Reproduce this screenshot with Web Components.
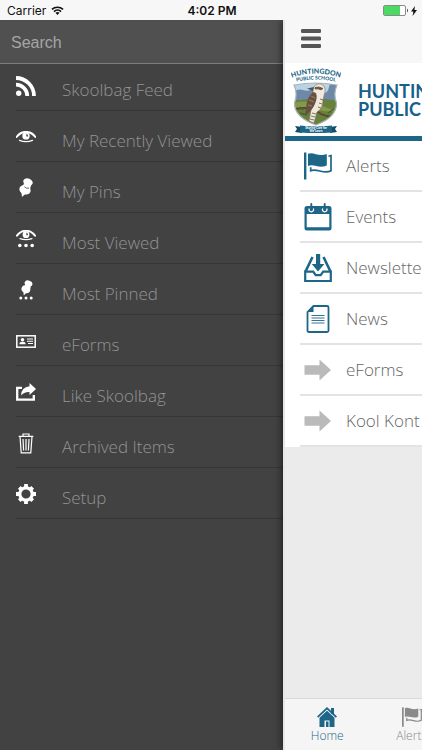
<!DOCTYPE html>
<html lang="en">
<head>
<meta charset="utf-8">
<meta name="viewport" content="width=device-width, initial-scale=1">
<title>Skoolbag</title>
<style>
	html, body {
		margin: 0;
		height: 100%;
		overflow: hidden;
	}

	body {
		font-family: "Open Sans", "Noto Sans", sans-serif;
		background: #f7f7f7;
	}
</style>
</head>
<body>
<skool-app></skool-app>

<script>
// name: [viewBox, shapes]
const ICONS = {
	wifi: ['0 0 14 10', `<g fill="none" stroke="currentColor" stroke-width="1.7"><path d="M1 3.7a8.6 8.6 0 0 1 12 0"/><path d="M3.2 6a5.4 5.4 0 0 1 7.6 0"/></g><path d="M4.8 7.4a3.2 3.2 0 0 1 4.4 0L7 9.8z" fill="currentColor"/>`],
	battery: ['0 0 26 12', `<rect x=".5" y=".5" width="22" height="10" rx="1.5" fill="#fff" stroke="#8a8a8a"/><rect x="1" y="1" width="16" height="9" fill="#4cd964"/><path d="M24 3.5q2 2 0 4z" fill="#444"/>`],
	bolt: ['0 0 6 10', `<path d="M4 0 0 5.6h2.4L1.6 10 6 4H3.4z" fill="currentColor"/>`],
	menu: ['0 0 20 20', `<g fill="currentColor"><rect width="20" height="4" rx="1.3"/><rect y="7.5" width="20" height="4" rx="1.3"/><rect y="15" width="20" height="4" rx="1.3"/></g>`],
	feed: ['0 0 20 20', `<circle cx="2.7" cy="17.3" r="2.7" fill="currentColor"/><path d="M0 8.7A11.3 11.3 0 0 1 11.3 20M0 2A18 18 0 0 1 18 20" fill="none" stroke="currentColor" stroke-width="3.8"/>`],
	eye: ['0 0 20 12', `<path d="M.6 6C5.500-.8 14.500-.8 19.400 6" fill="none" stroke="currentColor" stroke-width="2" stroke-linecap="round"/><path d="M3.500 9.300q6.500 2.600 13 0" fill="none" stroke="currentColor" stroke-width="1.300" stroke-linecap="round"/><circle cx="10" cy="4.900" r="3.700" fill="currentColor"/><path d="M10.400 2.800v2.600h1.800q0-2-1.800-2.600z" fill="#424242"/>`],
	eyeDots: ['0 0 20 18', `<path d="M1 5.600C6-.8 14-.8 19 5.600" fill="none" stroke="currentColor" stroke-width="2" stroke-linecap="round"/><path d="M4 8.600q6 2.200 12 0" fill="none" stroke="currentColor" stroke-width="1.200" stroke-linecap="round"/><circle cx="10" cy="4.700" r="3.400" fill="currentColor"/><path d="M10.400 2.600v2.600h1.600q0-2-1.600-2.600z" fill="#424242"/><g fill="currentColor"><circle cx="3.800" cy="15.500" r="1.800"/><circle cx="10" cy="15.500" r="1.800"/><circle cx="16.200" cy="15.500" r="1.800"/></g>`],
	pin: ['0 0 20 20', `<g fill="currentColor"><ellipse cx="12" cy="4" rx="4.900" ry="3.500" transform="rotate(22 12 4)"/><path d="M8 5 6.500 10l6.500 3 2.300-6z"/><ellipse cx="9" cy="11.800" rx="5.800" ry="4.600" transform="rotate(22 9 11.800)"/><path d="M5.400 14 6 19l3.700-3.600z"/></g><path d="M8.400 8.800q1.900 2 4.600 1.300" fill="none" stroke="#424242" stroke-width=".8"/>`],
	pinDots: ['0 0 20 20', `<g fill="currentColor"><ellipse cx="12.500" cy="3.500" rx="4" ry="3" transform="rotate(20 12.500 3.500)"/><path d="M9.200 4.500 8 8.500l5 2.200 2-4.200z"/><ellipse cx="9.900" cy="9.300" rx="4.500" ry="3.700" transform="rotate(22 9.900 9.300)"/><path d="M7.300 11 7.800 15.500l2.800-3z"/><circle cx="4.800" cy="18" r="1.500"/><circle cx="10" cy="18" r="1.500"/><circle cx="15.200" cy="18" r="1.500"/></g>`],
	card: ['0 0 20 13', `<rect x=".8" y=".8" width="18.400" height="11.400" fill="none" stroke="currentColor" stroke-width="1.500"/><g fill="currentColor"><circle cx="6.500" cy="4.800" r="1.800"/><path d="M3.400 9.200q0-2.400 3.100-2.400t3.100 2.400z"/><path d="M11 3.500h6v1h-6zM11 5.800h6v1h-6zM12 8h5v1h-5z"/></g>`],
	share: ['0 0 20 18', `<path d="M6 4.800H1.200v11.800h16.600V12" fill="none" stroke="currentColor" stroke-width="2.300"/><path d="M13.500 0 20 6l-6.500 6V9Q8 8.700 5 12.500 5.300 4 13.500 3.200z" fill="currentColor"/>`],
	trash: ['0 0 20 21', `<path d="M2.700 3.300h14.600M7 3V1h6v2M4 3.500l1.200 16.300h9.600L16 3.500M7 6l.6 11.500M10 6v11.500M13 6l-.6 11.500" fill="none" stroke="currentColor" stroke-width="1.200"/>`],
	gear: ['0 0 20 20', `<circle cx="10" cy="10" r="6.200" fill="none" stroke="currentColor" stroke-width="3.200"/><g stroke="currentColor" stroke-width="3.800"><path d="M10 0v4M10 16v4"/><path d="M10 .5v4M10 15.500v4" transform="rotate(45 10 10)"/><path d="M10 0v4M10 16v4" transform="rotate(90 10 10)"/><path d="M10 .5v4M10 15.500v4" transform="rotate(135 10 10)"/></g>`],
	flag: ['0 0 28 28', `<g fill="currentColor"><path d="M0 .5h2.400V27.500H0z"/><path d="M4 1.800C10-.6 14 5.500 22.800 2v11.600C15 17 10 11.500 4 14z"/></g><path d="M24.500 4.200 27 3.500v15.200c-7 4.300-14-3-20.300 0v-3.500" fill="none" stroke="currentColor" stroke-width="1.700"/>`],
	calendar: ['0 0 28 28', `<path fill-rule="evenodd" d="M3 3h22q2.500 0 2.500 2.500V25q0 2.500-2.500 2.500H3Q.5 27.500.5 25V5.500Q.5 3 3 3zm-.3 8v13.200h22.600V11z" fill="currentColor"/><path d="M5.300 5.500a2.300 2.300 0 1 0 4 0M18.700 5.500a2.300 2.300 0 1 0 4 0" fill="none" stroke="#fff" stroke-width="1.300"/><path d="M7.300 1v5.500M20.700 1v5.500" stroke="currentColor" stroke-width="1.900" stroke-linecap="round"/>`],
	inbox: ['0 0 28 28', `<g fill="none" stroke="currentColor"><path d="M8.500 3 1.500 17.500M19.500 3l7 14.500" stroke-width="2.600"/><path d="M1.200 17.600h8l2.500 3.600h5l2.500-3.600h7.600V27H1.200z" stroke-width="2.200"/></g><path d="M12 0h4.200v10h4.200L14 17.500 7.800 10H12z" fill="currentColor"/>`],
	news: ['0 0 28 28', `<path d="M9.500 1H23q1.500 0 1.500 1.500v23Q24.500 27 23 27H5q-1.500 0-1.500-1.500V7z" fill="#fff" stroke="currentColor" stroke-width="1.800"/><path d="M9.500 1v6h-6z" fill="currentColor"/><path d="M7.500 10.500h13M7.500 13h13M7.500 15.500h13M7.500 18h13" stroke="currentColor" stroke-width=".9"/>`],
	arrow: ['0 0 28 28', `<path d="M.5 9.200h15V3.500L27 14 15.500 24.500v-5.700H.5z" fill="#bababa"/>`],
	home: ['0 0 20 20', `<g fill="currentColor"><path d="M14 1h3v6h-3z"/><path d="M10 0 0 9.600l1.200 1.200L10 2.600l8.800 8.200L20 9.600z"/><path d="M10 3.800 2.500 10.800V20h5v-6.500h5V20h5v-9.200z"/><path d="M9 14.500h2.500V20H9z"/></g>`]
};

class SkoolIcon extends HTMLElement {

	constructor() {
		super();
		this.attachShadow({ mode: 'open' });
	}

	connectedCallback() {
		const [box, shapes] = ICONS[this.getAttribute('name')];
		this.shadowRoot.innerHTML = `
			<style>
				:host {
					display: inline-flex;
					width: 20px;
					flex: none;
				}

				svg {
					display: block;
					width: 100%;
				}
			</style>
			<svg viewBox="${box}" aria-hidden="true">${shapes}</svg>
		`;
	}
}
customElements.define('skool-icon', SkoolIcon);


class StatusBar extends HTMLElement {

	constructor() {
		super();
		this.attachShadow({ mode: 'open' }).innerHTML = `
			<style>
				:host {
					display: grid;
					grid-template-columns: 1fr auto 1fr;
					align-items: center;
					box-sizing: border-box;
					height: 20px;
					padding: 2px 5px 0 7px;
					background: #f7f7f7;
					color: #111;
					font: 12px/16px Inter, Roboto, sans-serif;
				}

				div {
					display: flex;
					align-items: center;
					gap: 5px;
				}

				div:last-child {
					justify-content: flex-end;
					gap: 2px;
				}

				time {
					font-weight: 600;
				}

				.wifi {
					width: 13px;
				}

				.battery {
					width: 26px;
				}

				.bolt {
					width: 6px;
				}
			</style>
			<div><span>Carrier</span><skool-icon class="wifi" name="wifi"></skool-icon></div>
			<time>4:02 PM</time>
			<div><skool-icon class="battery" name="battery"></skool-icon><skool-icon class="bolt" name="bolt"></skool-icon></div>
		`;
	}
}
customElements.define('status-bar', StatusBar);


class DrawerItem extends HTMLElement {

	constructor() {
		super();
		this.attachShadow({ mode: 'open' });
	}

	connectedCallback() {
		this.shadowRoot.innerHTML = `
			<style>
				:host {
					display: block;
					margin-left: 16px;
					border-bottom: 1px solid #373737;
				}

				a {
					display: flex;
					align-items: center;
					gap: 26px;
					height: 46px;
					padding-bottom: 2px;
					box-sizing: border-box;
					color: #939393;
					font-size: 17px;
					font-weight: 300;
					line-height: 24px;
					text-decoration: none;
					white-space: nowrap;
				}

				span {
					padding-top: 8px;
				}

				skool-icon {
					color: #fff;
				}
			</style>
			<a href="#"><skool-icon name="${this.getAttribute('icon')}"></skool-icon><span><slot></slot></span></a>
		`;
	}
}
customElements.define('drawer-item', DrawerItem);


class SideDrawer extends HTMLElement {

	constructor() {
		super();
		this.attachShadow({ mode: 'open' }).innerHTML = `
			<style>
				:host {
					display: block;
					background: #424242;
				}

				input {
					display: block;
					box-sizing: border-box;
					width: 100%;
					height: 44px;
					margin: 0;
					padding: 2px 11px 0;
					border: 0;
					border-bottom: 1px solid #7d7d7d;
					border-radius: 0;
					outline: 0;
					background: #505050;
					color: #fff;
					font: 16px "Liberation Sans", Arial, sans-serif;
				}

				input::placeholder {
					color: #a5a5a5;
					opacity: 1;
				}

				nav {
					display: flex;
					flex-direction: column;
					gap: 4px;
				}
			</style>
			<input type="text" placeholder="Search" aria-label="Search">
			<nav><slot></slot></nav>
		`;
	}
}
customElements.define('side-drawer', SideDrawer);


class SchoolBanner extends HTMLElement {

	constructor() {
		super();
		this.attachShadow({ mode: 'open' }).innerHTML = `
			<style>
				:host {
					display: flex;
					align-items: center;
					gap: 17px;
					height: 73px;
					padding-left: 6px;
					border-bottom: 5px solid #1d6688;
					background: #fff;
				}

				svg {
					flex: none;
					width: 50px;
					height: 66px;
				}

				h1 {
					margin: 0;
					color: #17608a;
					font: 700 18px/18px Lato, sans-serif;
					white-space: nowrap;
				}
			</style>
			<svg viewBox="0 0 50 66" font-family="Lato, sans-serif" font-weight="900" text-anchor="middle">
				<defs>
					<path id="top" d="M0 11Q25 2 50 11"/>
					<path id="low" d="M0 16Q25 9 50 16"/>
					<clipPath id="shield"><path d="M3 18Q25 14 46 18Q42 27 45.500 36Q46 50 25 58Q3 50 3.500 36Q7 27 3 18z"/></clipPath>
				</defs>
				<text font-size="7" fill="#1d6688"><textPath href="#top" startOffset="50%">HUNTINGDON</textPath></text>
				<text font-size="5" fill="#1d6688"><textPath href="#low" startOffset="50%">PUBLIC SCHOOL</textPath></text>
				<g clip-path="url(#shield)">
					<path d="M0 12h50v50H0z" fill="#b9d3e6"/>
					<path d="M0 27q6-6 12-4t9-1 9 2 8-4 12 4v12H0z" fill="#6e89a8"/>
					<path d="M0 34q25-4 50 0v26H0z" fill="#65813b"/>
					<path d="M0 36q18-4 32 3T50 40v4q-15 2-26-2T0 42z" fill="#86984a"/>
					<path d="M5 42q14-3 22 3t20 4" fill="none" stroke="#5b4930" stroke-width="2"/>
					<path d="M9 46l7 2M37 46l6-4M12 43l-3-3" stroke="#4c6030" stroke-width="1.500"/>
				</g>
				<path d="M3 18Q25 14 46 18Q42 27 45.500 36Q46 50 25 58Q3 50 3.500 36Q7 27 3 18z" fill="none" stroke="#a8b4b8" stroke-width="1.200"/>
				<path d="M22 22q2-6 8-5 5 2 4 8l-2 8q0 9-6 12l-3 11-5-2 2-11q-3-8 2-15z" fill="#eee9dc" stroke="#7b6b5c" stroke-width=".6"/>
				<path d="M22 25q-6 5-7 16l-1 7q5-2 9-9 4-8 2-13z" fill="#66503f"/>
				<path d="M20 29l4 2M18 33l5 2M17 38l4 1" stroke="#a98e70" stroke-width=".8"/>
				<path d="M24 20.500q4-1.500 8 1l-2 1.300q-3-1.400-6-.8zM29 32l3 1M28 36l3 1M27 40l3 1M21 46l4 1M20 49l4 1M19 52l4 1" fill="#6b5240" stroke="#6b5240" stroke-width=".8"/>
				<path d="M23 20l-7 1.500 6 2.500z" fill="#59534e"/>
				<path d="M4 59l7 1v6l-7-1 2-3zM46 59l-7 1v6l7-1-2-3z" fill="#124b69"/>
				<path d="M9 58.500q16 2 32 0v7q-16 1-32 0z" fill="#1d6688"/>
				<g font-size="3" fill="#fff"><text x="25" y="62">Sharing Care for</text><text x="25" y="65">We Learn</text></g>
			</svg>
			<h1><slot></slot></h1>
		`;
	}
}
customElements.define('school-banner', SchoolBanner);


class ListItem extends HTMLElement {

	constructor() {
		super();
		this.attachShadow({ mode: 'open' });
	}

	connectedCallback() {
		this.shadowRoot.innerHTML = `
			<style>
				:host {
					display: block;
					padding-left: 15px;
					background: #fff;
				}

				a {
					display: flex;
					align-items: center;
					gap: 14px;
					box-sizing: border-box;
					height: 51px;
					padding-left: 4px;
					border-bottom: 2px solid #e3e3e3;
					color: #666;
					font-size: 17px;
					font-weight: 300;
					line-height: 24px;
					text-decoration: none;
					white-space: nowrap;
				}

				skool-icon {
					width: 28px;
					color: #1d6688;
				}
			</style>
			<a href="#"><skool-icon name="${this.getAttribute('icon')}"></skool-icon><span><slot></slot></span></a>
		`;
	}
}
customElements.define('list-item', ListItem);


class TabItem extends HTMLElement {

	constructor() {
		super();
		this.attachShadow({ mode: 'open' });
	}

	connectedCallback() {
		this.shadowRoot.innerHTML = `
			<style>
				:host {
					flex: 1;
					color: #8a8a8a;
				}

				:host([active]) {
					color: #1d6688;
				}

				a {
					display: flex;
					flex-direction: column;
					align-items: center;
					padding-top: 8px;
					color: inherit;
					font-size: 12px;
					font-weight: 300;
					line-height: 17px;
					text-decoration: none;
				}
			</style>
			<a href="#"><skool-icon name="${this.getAttribute('icon')}"></skool-icon><span><slot></slot></span></a>
		`;
	}
}
customElements.define('tab-item', TabItem);


class HomePage extends HTMLElement {

	constructor() {
		super();
		this.attachShadow({ mode: 'open' }).innerHTML = `
			<style>
				:host {
					display: flex;
					flex-direction: column;
					width: 100vw;
					background: #ebebeb;
				}

				header {
					display: flex;
					align-items: center;
					box-sizing: border-box;
					height: 43px;
					padding: 0 16px 6px;
					background: #f7f7f7;
				}

				button {
					display: flex;
					padding: 0;
					border: 0;
					background: none;
					color: #555;
				}

				main {
					flex: 1;
				}

				footer {
					display: flex;
					height: 51px;
					border-top: 1px solid #d9d9d9;
					background: #f5f5f5;
				}
			</style>
			<header><button type="button" aria-label="Menu"><skool-icon name="menu"></skool-icon></button></header>
			<slot name="banner"></slot>
			<main><slot></slot></main>
			<footer><slot name="tab"></slot></footer>
		`;
	}
}
customElements.define('home-page', HomePage);


class SkoolApp extends HTMLElement {

	constructor() {
		super();
		this.attachShadow({ mode: 'open' }).innerHTML = `
			<style>
				:host {
					display: flex;
					flex-direction: column;
					height: 100vh;
				}

				.view {
					flex: 1;
					display: flex;
					min-height: 0;
					overflow: hidden;
				}

				side-drawer {
					flex: none;
					width: 283px;
				}

				/* full-width page, pushed aside by the open drawer */
				home-page {
					flex: none;
					border-left: 2px solid #e6e6e6;
					box-shadow: -1px 0 7px rgba(0, 0, 0, 0.6);
					z-index: 1;
				}
			</style>
			<status-bar></status-bar>
			<div class="view">
				<side-drawer>
					<drawer-item icon="feed">Skoolbag Feed</drawer-item>
					<drawer-item icon="eye">My Recently Viewed</drawer-item>
					<drawer-item icon="pin">My Pins</drawer-item>
					<drawer-item icon="eyeDots">Most Viewed</drawer-item>
					<drawer-item icon="pinDots">Most Pinned</drawer-item>
					<drawer-item icon="card">eForms</drawer-item>
					<drawer-item icon="share">Like Skoolbag</drawer-item>
					<drawer-item icon="trash">Archived Items</drawer-item>
					<drawer-item icon="gear">Setup</drawer-item>
				</side-drawer>
				<home-page>
					<school-banner slot="banner">HUNTINGDON<br>PUBLIC SCHOOL</school-banner>
					<list-item icon="flag">Alerts</list-item>
					<list-item icon="calendar">Events</list-item>
					<list-item icon="inbox">Newsletters</list-item>
					<list-item icon="news">News</list-item>
					<list-item icon="arrow">eForms</list-item>
					<list-item icon="arrow">Kool Kont</list-item>
					<tab-item slot="tab" icon="home" active>Home</tab-item>
					<tab-item slot="tab" icon="flag">Alerts</tab-item>
					<tab-item slot="tab" icon="calendar">Events</tab-item>
					<tab-item slot="tab" icon="inbox">Newsletters</tab-item>
					<tab-item slot="tab" icon="news">News</tab-item>
				</home-page>
			</div>
		`;
	}
}
customElements.define('skool-app', SkoolApp);
</script>
</body>
</html>
